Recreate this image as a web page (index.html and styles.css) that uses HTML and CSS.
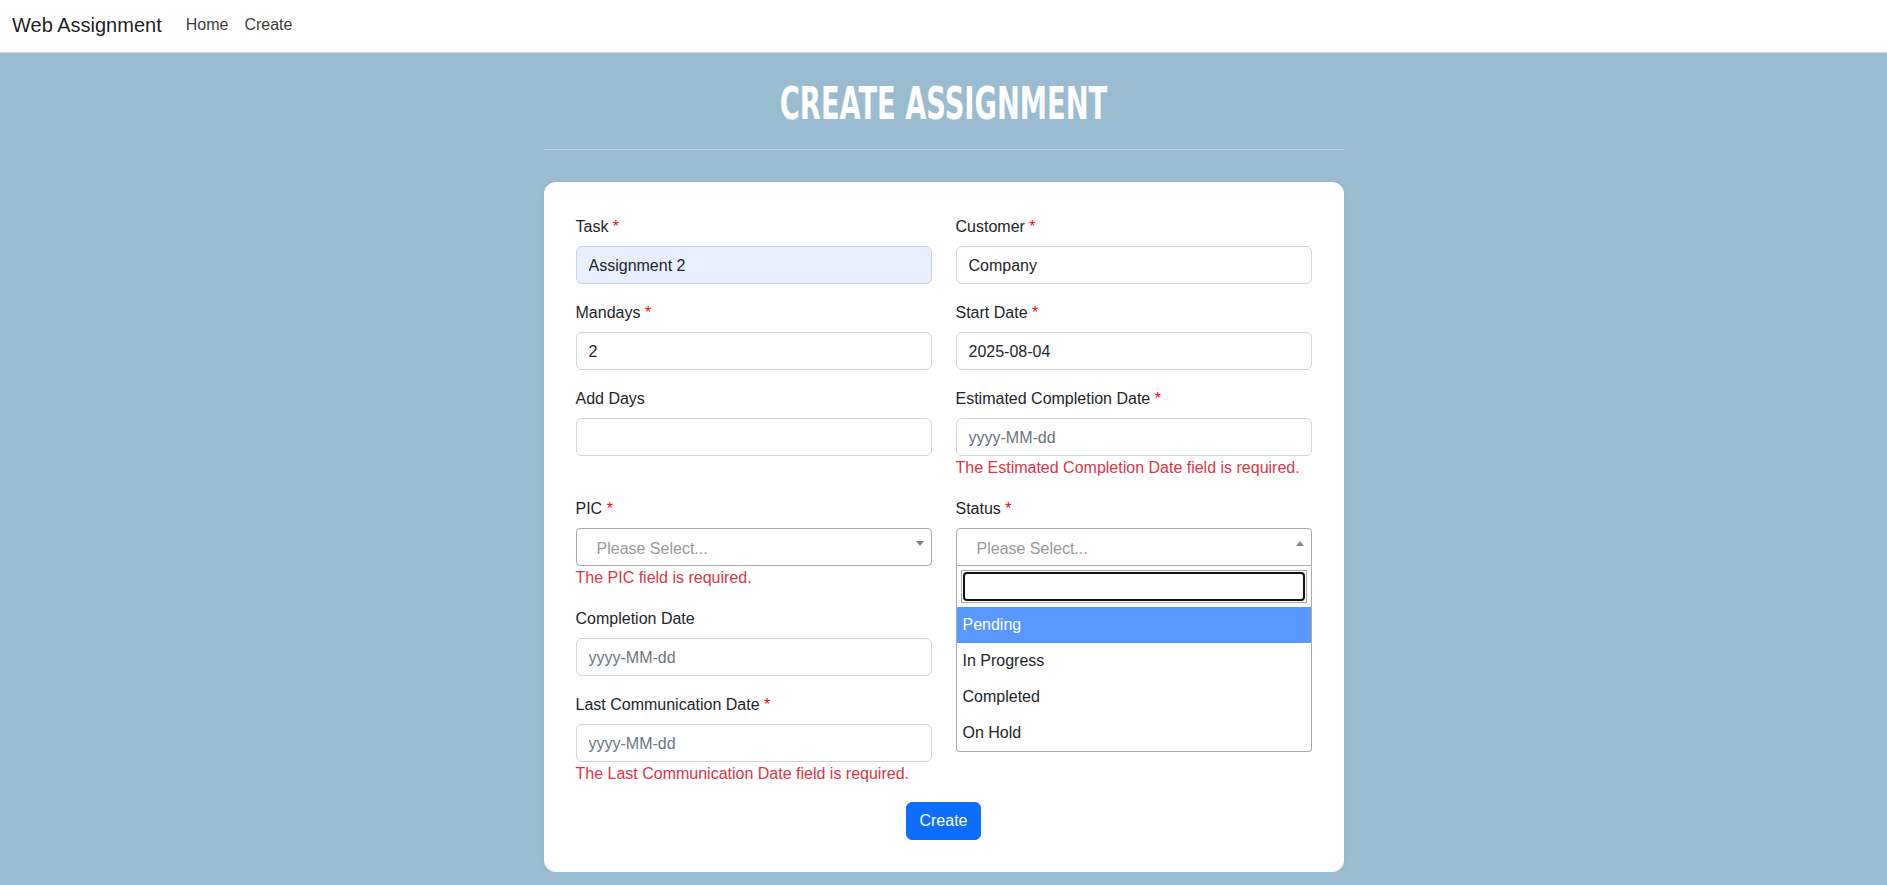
FILE: index.html
```html
<!DOCTYPE html>
<html lang="en">
<head>
<meta charset="utf-8">
<title>Create Assignment</title>
<link rel="stylesheet" href="styles.css">
</head>
<body>
<nav class="navbar">
  <a class="brand" href="#">Web Assignment</a>
  <ul class="nav">
    <li><a class="nav-link" href="#">Home</a></li>
    <li><a class="nav-link" href="#">Create</a></li>
  </ul>
</nav>
<main class="container">
  <h1 class="page-title"><span>CREATE ASSIGNMENT</span></h1>
  <hr class="divider">
  <form class="card">
    <div class="form-grid">
      <div class="field">
        <label class="form-label">Task <span class="req">*</span></label>
        <input class="form-control autofill" type="text" value="Assignment 2">
      </div>
      <div class="field">
        <label class="form-label">Customer <span class="req">*</span></label>
        <input class="form-control" type="text" value="Company">
      </div>
      <div class="field">
        <label class="form-label">Mandays <span class="req">*</span></label>
        <input class="form-control" type="text" value="2">
      </div>
      <div class="field">
        <label class="form-label">Start Date <span class="req">*</span></label>
        <input class="form-control" type="text" value="2025-08-04">
      </div>
      <div class="field">
        <label class="form-label">Add Days</label>
        <input class="form-control" type="text" value="">
      </div>
      <div class="field">
        <label class="form-label">Estimated Completion Date <span class="req">*</span></label>
        <input class="form-control" type="text" placeholder="yyyy-MM-dd">
        <div class="error">The Estimated Completion Date field is required.</div>
      </div>
      <div class="field">
        <label class="form-label">PIC <span class="req">*</span></label>
        <div class="select2">
          <div class="selection">
            <span class="placeholder">Please Select...</span>
            <span class="arrow arrow-down"></span>
          </div>
        </div>
        <div class="error">The PIC field is required.</div>
      </div>
      <div class="field">
        <label class="form-label">Status <span class="req">*</span></label>
        <div class="select2 open">
          <div class="selection">
            <span class="placeholder">Please Select...</span>
            <span class="arrow arrow-up"></span>
          </div>
          <div class="dropdown">
            <div class="search-wrap">
              <div class="search-box"><div class="search-focus"></div></div>
            </div>
            <ul class="options">
              <li class="option highlighted">Pending</li>
              <li class="option">In Progress</li>
              <li class="option">Completed</li>
              <li class="option">On Hold</li>
            </ul>
          </div>
        </div>
      </div>
      <div class="field">
        <label class="form-label">Completion Date</label>
        <input class="form-control" type="text" placeholder="yyyy-MM-dd">
      </div>
      <div class="field empty"></div>
      <div class="field">
        <label class="form-label">Last Communication Date <span class="req">*</span></label>
        <input class="form-control" type="text" placeholder="yyyy-MM-dd">
        <div class="error">The Last Communication Date field is required.</div>
      </div>
      <div class="field empty"></div>
    </div>
    <div class="actions">
      <button class="btn-primary" type="button">Create</button>
    </div>
  </form>
</main>
</body>
</html>
```

FILE: styles.css
```css
* {
  box-sizing: border-box;
}

html, body {
  margin: 0;
  padding: 0;
}

body {
  background: #9abcd0;
  font-family: "Liberation Sans", Arial, sans-serif;
  font-size: 16px;
  line-height: 24px;
  color: #212529;
}

/* Navbar */
.navbar {
  display: flex;
  align-items: center;
  height: 53px;
  padding: 0 12px 3px;
  background: #ffffff;
  border-bottom: 1px solid #d6d6d6;
}

.brand {
  font-size: 20px;
  line-height: 30px;
  color: rgba(0, 0, 0, 0.9);
  text-decoration: none;
  margin-right: 16px;
}

.nav {
  display: flex;
  list-style: none;
  margin: 0;
  padding: 0;
}

.nav-link {
  display: block;
  padding: 8px;
  font-size: 16px;
  color: rgba(0, 0, 0, 0.8);
  text-decoration: none;
}

/* Main */
.container {
  width: 800px;
  margin: 0 auto;
  padding-top: 24px;
}

.page-title {
  margin: 0;
  text-align: center;
  font-family: "Liberation Sans Narrow", "DejaVu Sans Condensed", "Liberation Sans", sans-serif;
  font-stretch: condensed;
  font-weight: 700;
  font-size: 45px;
  line-height: 53px;
  color: #ffffff;
}

.page-title span {
  display: inline-block;
  transform: scaleX(0.675);
}

.divider {
  margin: 19px 0 32px;
  border: 0;
  border-top: 1px solid rgba(255, 255, 255, 0.35);
  height: 0;
}

.card {
  display: block;
  background: #ffffff;
  border-radius: 12px;
  padding: 32px;
  box-shadow: 0 2px 6px rgba(0, 0, 0, 0.06);
}

.form-grid {
  display: grid;
  grid-template-columns: 1fr 1fr;
  column-gap: 24px;
}

.field {
  margin-bottom: 16px;
}

.form-label {
  display: block;
  margin-bottom: 8px;
  padding-top: 1px;
  line-height: 23px;
  color: #212529;
}

.req {
  color: #ff0000;
}

.form-control {
  display: block;
  width: 100%;
  height: 38px;
  padding: 7px 12px 5px;
  font-family: inherit;
  font-size: 16px;
  line-height: 24px;
  color: #212529;
  background: #ffffff;
  border: 1px solid #ced4da;
  border-radius: 6px;
  outline: none;
}

.form-control::placeholder {
  color: #6c757d;
}

.form-control.autofill {
  background: #e8f0fe;
}

.error {
  color: #dc3545;
  line-height: 24px;
}

/* Select2-like */
.select2 {
  position: relative;
}

.selection {
  position: relative;
  height: 38px;
  padding: 6px 28px 0 20px;
  border: 1px solid #aaaaaa;
  border-radius: 4px;
  background: #ffffff;
  line-height: 28px;
}

.select2.open .selection {
  border-bottom-left-radius: 0;
  border-bottom-right-radius: 0;
}

.placeholder {
  color: #999999;
}

.arrow {
  position: absolute;
  right: 7px;
  top: 12px;
  width: 0;
  height: 0;
  border-style: solid;
}

.arrow-down {
  border-width: 5px 4px 0 4px;
  border-color: #888888 transparent transparent transparent;
}

.arrow-up {
  border-width: 0 4px 5px 4px;
  border-color: transparent transparent #888888 transparent;
}

.dropdown {
  position: absolute;
  top: 100%;
  left: 0;
  right: 0;
  z-index: 10;
  background: #ffffff;
  border: 1px solid #aaaaaa;
  border-top: none;
  border-radius: 0 0 4px 4px;
}

.search-wrap {
  padding: 4px;
}

.search-box {
  height: 33px;
  padding: 1px;
  border: 1px solid #aaaaaa;
}

.search-focus {
  height: 100%;
  border: 2px solid #101010;
  border-radius: 4px;
}

.options {
  list-style: none;
  margin: 0;
  padding: 0;
}

.option {
  padding: 6px;
  line-height: 24px;
  color: #212529;
}

.option.highlighted {
  background: #5897fb;
  color: #ffffff;
}

/* Actions */
.actions {
  display: flex;
  justify-content: center;
}

.btn-primary {
  height: 38px;
  padding: 6px 12px;
  font-family: inherit;
  font-size: 16px;
  line-height: 24px;
  color: #ffffff;
  background: #0d6efd;
  border: 1px solid #0d6efd;
  border-radius: 6px;
}
```
